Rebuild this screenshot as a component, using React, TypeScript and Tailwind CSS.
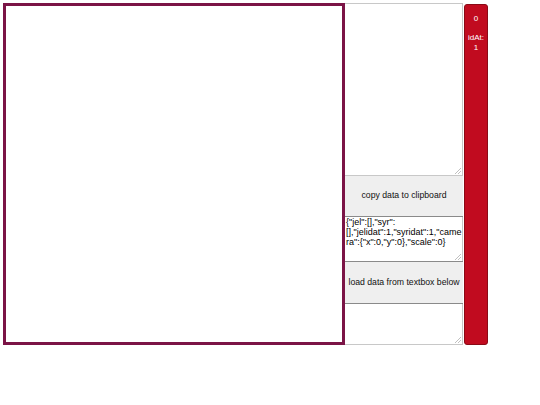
export default function App() {
  return (
    <div className="w-[540px] h-[405px] bg-white" style={{ fontFamily: '"Liberation Sans", Arial, sans-serif' }}>
      <div className="flex flex-row pt-[3px] pl-[3px]">
        <div className="w-[342px] h-[342px] border-[3px] border-[#7b1446] bg-white"></div>
        <div className="w-[118px] h-[342px] flex flex-col">
          <div className="relative h-[173px] border border-l-0 border-[#c8c8c8] bg-white">
            <ResizeHandle />
          </div>
          <div className="h-[41px] flex items-center justify-center bg-[#efefef] border-b border-[#8a8a8a] text-[8.7px] text-[#111]">
            copy data to clipboard
          </div>
          <div className="relative h-[44px] border-r border-[#c8c8c8] bg-white pl-[1px] pt-0 text-[9px] leading-[10px] text-black">
            <div>{'{"jel":[],"syr":'}</div>
            <div>{'[],"jelidat":1,"syridat":1,"came'}</div>
            <div>{'ra":{"x":0,"y":0},"scale":0}'}</div>
            <ResizeHandle />
          </div>
          <div className="h-[43px] flex items-center justify-center bg-[#efefef] border-t border-b border-[#8a8a8a] text-[8.7px] text-[#111]">
            load data from textbox below
          </div>
          <div className="relative flex-1 border-r border-b border-[#c8c8c8] bg-white">
            <ResizeHandle />
          </div>
        </div>
        <div className="ml-[1px] mt-[1px] w-[24px] h-[341px] rounded-[3px] border border-[#8a0a16] bg-[#c10b1f] flex flex-col items-center pt-[9px] text-white text-[8px] leading-[9.5px]">
          <div>0</div>
          <div>&nbsp;</div>
          <div>idAt:</div>
          <div>1</div>
        </div>
      </div>
    </div>
  );
}

function ResizeHandle() {
  return (
    <svg className="absolute right-[1px] bottom-[1px]" width="6" height="6" viewBox="0 0 6 6">
      <line x1="6" y1="0" x2="0" y2="6" stroke="#b0b0b0" strokeWidth="0.8" />
      <line x1="6" y1="3" x2="3" y2="6" stroke="#b0b0b0" strokeWidth="0.8" />
    </svg>
  );
}
